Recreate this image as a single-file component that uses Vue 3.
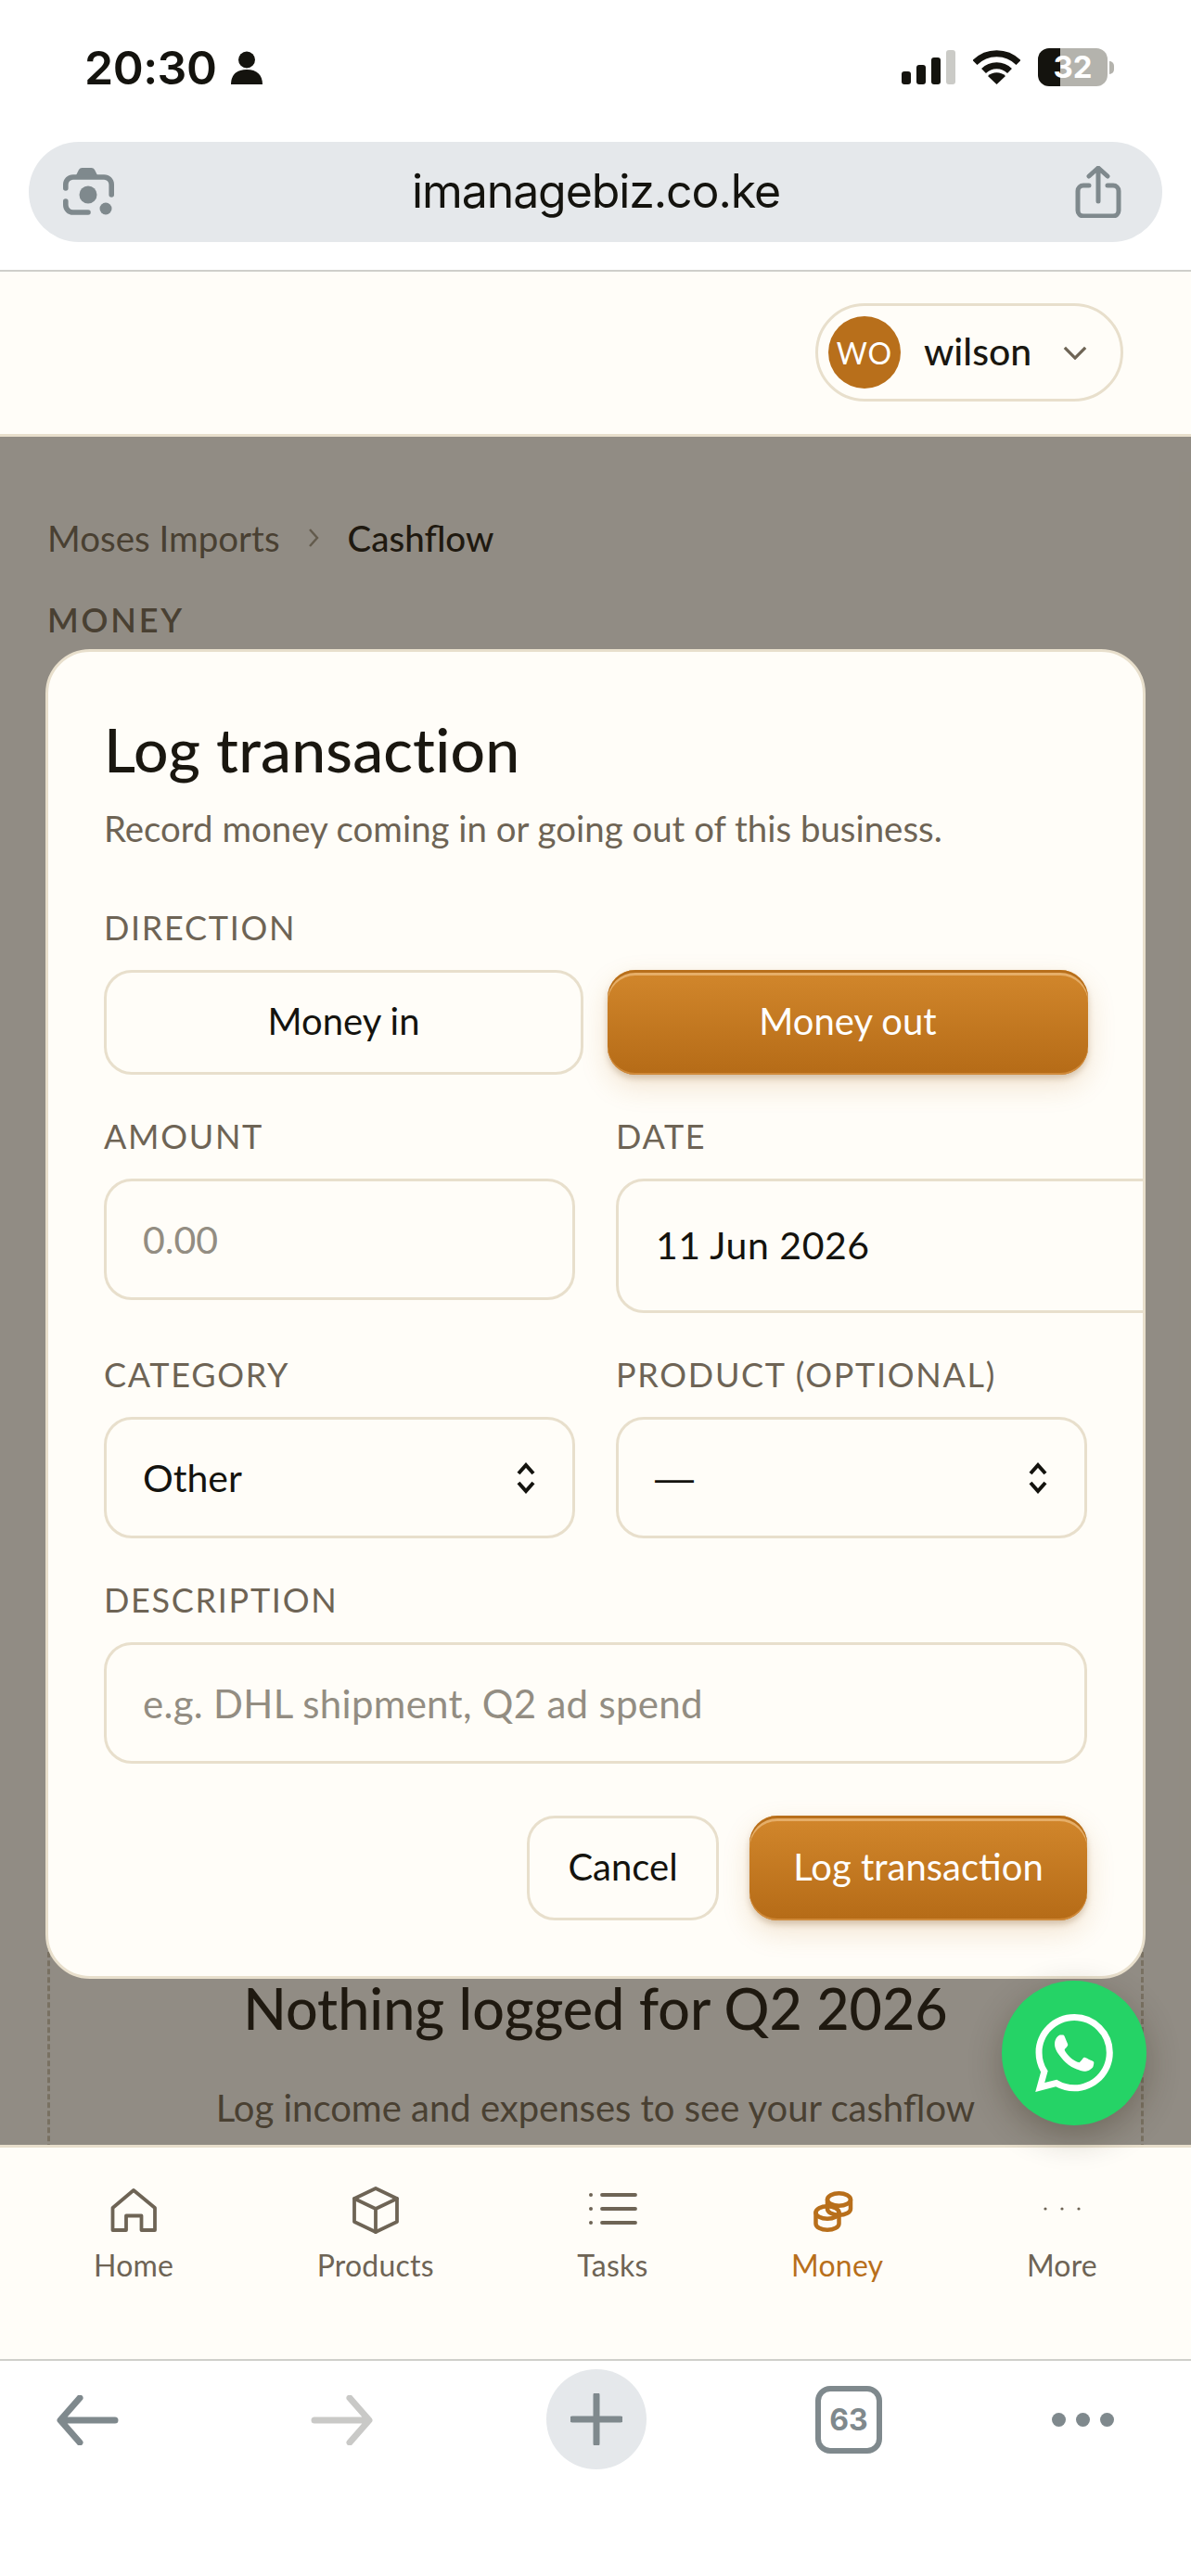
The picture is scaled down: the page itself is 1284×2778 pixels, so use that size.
<script setup>
const tabs = [
    { key: 'home', label: 'Home' },
    { key: 'products', label: 'Products' },
    { key: 'tasks', label: 'Tasks' },
    { key: 'money', label: 'Money', active: true },
    { key: 'more', label: 'More' }
]
</script>

<template>
    <div class="phone">
        <header class="status">
            <div class="status-left">
                <span class="time">20:30</span>
                <svg class="person" viewBox="0 0 34 36"><circle cx="17" cy="9.5" r="9" /><path d="M0 36c0-10 6-16 17-16s17 6 17 16z" /></svg>
            </div>
            <div class="status-right">
                <div class="signal"><i class="b1"></i><i class="b2"></i><i class="b3"></i><i class="b4"></i></div>
                <svg class="wifi" viewBox="0 0 51 37">
                    <path d="M2 13.5a33 33 0 0 1 47 0" />
                    <path d="M11.5 22.5a20 20 0 0 1 28 0" />
                    <path class="wifi-dot" d="M25.5 37 16 28a14 14 0 0 1 19 0z" />
                </svg>
                <div class="battery"><span>32</span></div>
                <i class="nub"></i>
            </div>
        </header>

        <div class="urlbar">
            <svg class="lens" viewBox="0 0 60 60">
                <path class="lens-top" d="M15 14l4-8a4 4 0 0 1 3.5-2h10a4 4 0 0 1 3.5 2l4 8z" />
                <path class="lens-line" d="M4.800 26v-4a8 8 0 0 1 8-8h33.400a8 8 0 0 1 8 8v11" />
                <path class="lens-line" d="M4.800 40v4a8 8 0 0 0 8 8H29" />
                <circle cx="29" cy="33" r="9.500" />
                <circle cx="48" cy="48" r="6.500" />
            </svg>
            <span class="url">imanagebiz.co.ke</span>
            <svg class="share" viewBox="0 0 50 56">
                <path d="M15 21H9a6 6 0 0 0-6 6v21a6 6 0 0 0 6 6h32a6 6 0 0 0 6-6V27a6 6 0 0 0-6-6h-6" />
                <path d="M25 38V3M15 11l10-9 10 9" />
            </svg>
        </div>

        <div class="topbar">
            <div class="user">
                <span class="avatar">WO</span>
                <span class="user-name">wilson</span>
                <svg class="caret" viewBox="0 0 28 16"><path d="M2 2l12 12L26 2" /></svg>
            </div>
        </div>

        <main class="main">
            <nav class="crumbs">
                <span>Moses Imports</span>
                <svg viewBox="0 0 12 22"><path d="M2 2l8 9-8 9" /></svg>
                <strong>Cashflow</strong>
            </nav>
            <div class="eyebrow">MONEY</div>
            <section class="empty">
                <h2>Nothing logged for Q2 2026</h2>
                <p>Log income and expenses to see your cashflow trends.</p>
            </section>

            <div class="overlay">
                <div class="modal">
                    <h1>Log transaction</h1>
                    <p class="sub">Record money coming in or going out of this business.</p>

                    <div class="label first">DIRECTION</div>
                    <div class="direction">
                        <button type="button" class="btn plain">Money in</button>
                        <button type="button" class="btn primary">Money out</button>
                    </div>

                    <div class="fields">
                        <div>
                            <div class="label">AMOUNT</div>
                            <div class="field placeholder">0.00</div>
                        </div>
                        <div>
                            <div class="label">DATE</div>
                            <div class="field date">11 Jun 2026</div>
                        </div>
                        <div>
                            <div class="label">CATEGORY</div>
                            <div class="field select">
                                <span>Other</span>
                                <svg class="updown" viewBox="0 0 24 34"><path d="M4 12l8-9 8 9M4 22l8 9 8-9" /></svg>
                            </div>
                        </div>
                        <div>
                            <div class="label">PRODUCT (OPTIONAL)</div>
                            <div class="field select">
                                <span class="none">—</span>
                                <svg class="updown" viewBox="0 0 24 34"><path d="M4 12l8-9 8 9M4 22l8 9 8-9" /></svg>
                            </div>
                        </div>
                    </div>

                    <div class="label">DESCRIPTION</div>
                    <div class="field placeholder long">e.g. DHL shipment, Q2 ad spend</div>

                    <div class="actions">
                        <button type="button" class="btn plain cancel">Cancel</button>
                        <button type="button" class="btn primary submit">Log transaction</button>
                    </div>
                </div>
            </div>
        </main>

        <nav class="tabbar">
            <div v-for="tab in tabs" :key="tab.key" class="tab" :class="{ active: tab.active }">
                <svg class="tab-icon" :class="tab.key" viewBox="0 0 54 54">
                    <path v-if="tab.key === 'home'" d="M27 5 4.5 24v24h14.5V32.5h16.5V48H50V24z" />
                    <template v-else-if="tab.key === 'products'">
                        <path d="M27 3 4 14v25l23 11 23-11V14z" />
                        <path d="M4 14l23 11 23-11M27 25v25" />
                    </template>
                    <template v-else-if="tab.key === 'tasks'">
                        <path d="M16 10h36M16 25h36M16 40h36" />
                        <circle class="dot" cx="4" cy="10" r="2" />
                        <circle class="dot" cx="4" cy="25" r="2" />
                        <circle class="dot" cx="4" cy="40" r="2" />
                    </template>
                    <template v-else-if="tab.key === 'money'">
                        <ellipse cx="31.500" cy="15" rx="12.500" ry="6.800" />
                        <path d="M19 15v10c0 3.800 5.600 6.800 12.500 6.800S44 28.800 44 25V15" />
                        <ellipse cx="19" cy="29" rx="12.500" ry="6.800" />
                        <path d="M6.500 29v12c0 3.800 5.600 6.800 12.500 6.800s12.500-3 12.500-6.800V29" />
                    </template>
                    <template v-else>
                        <circle class="dot" cx="9" cy="25" r="1.600" />
                        <circle class="dot" cx="27" cy="25" r="1.600" />
                        <circle class="dot" cx="45" cy="25" r="1.600" />
                    </template>
                </svg>
                <span>{{ tab.label }}</span>
            </div>
        </nav>

        <div class="browserbar">
            <svg class="arrow" viewBox="0 0 68 54"><path d="M64 27H6M26 3 5 27l21 24" /></svg>
            <svg class="arrow forward" viewBox="0 0 68 54"><path d="M4 27h58M42 3l21 24-21 24" /></svg>
            <div class="plus"><svg viewBox="0 0 56 56"><path d="M28 2v52M2 28h52" /></svg></div>
            <div class="tabcount">63</div>
            <div class="dots"><i></i><i></i><i></i></div>
        </div>

        <button type="button" class="fab" aria-label="WhatsApp">
            <svg viewBox="0 0 24 24"><path d="M17.472 14.382c-.297-.149-1.758-.867-2.03-.967-.273-.099-.471-.148-.67.15-.197.297-.767.966-.94 1.164-.173.199-.347.223-.644.075-.297-.15-1.255-.463-2.39-1.475-.883-.788-1.48-1.761-1.653-2.059-.173-.297-.018-.458.13-.606.134-.133.298-.347.446-.52.149-.174.198-.298.298-.497.099-.198.05-.371-.025-.52-.075-.149-.669-1.612-.916-2.207-.242-.579-.487-.5-.669-.51-.173-.008-.371-.01-.57-.01-.198 0-.52.074-.792.372-.272.297-1.04 1.016-1.04 2.479 0 1.462 1.065 2.875 1.213 3.074.149.198 2.096 3.2 5.077 4.487.709.306 1.262.489 1.694.625.712.227 1.36.195 1.871.118.571-.085 1.758-.719 2.006-1.413.248-.694.248-1.289.173-1.413-.074-.124-.272-.198-.57-.347m-5.421 7.403h-.004a9.87 9.87 0 01-5.031-1.378l-.361-.214-3.741.982.998-3.648-.235-.374a9.86 9.86 0 01-1.51-5.26c.001-5.45 4.436-9.884 9.888-9.884 2.64 0 5.122 1.03 6.988 2.898a9.825 9.825 0 012.893 6.994c-.003 5.45-4.437 9.884-9.885 9.884m8.413-18.297A11.815 11.815 0 0012.05 0C5.495 0 .16 5.335.157 11.892c0 2.096.547 4.142 1.588 5.945L.057 24l6.305-1.654a11.882 11.882 0 005.683 1.448h.005c6.554 0 11.89-5.335 11.893-11.893a11.821 11.821 0 00-3.48-8.413z" /></svg>
        </button>
    </div>
</template>

<style>
html, body { margin: 0; background: #fff; }
</style>

<style scoped>
.phone { position: relative; width: 1284px; height: 2778px; display: flex; flex-direction: column; overflow: hidden; background: #fff; color: #1a1710; font-family: Lato, "Noto Sans", sans-serif; }

.status { height: 153px; flex: none; box-sizing: border-box; padding: 46px 0 0 91px; display: flex; justify-content: space-between; align-items: flex-start; font-family: Inter, sans-serif; }
.status-left { display: flex; align-items: center; gap: 16px; height: 54px; }
.time { font-size: 50px; font-weight: 600; letter-spacing: -.5px; color: #14130e; line-height: 54px; }
.person { width: 34px; height: 36px; fill: #14130e; }
.status-right { position: relative; width: 312px; height: 60px; display: flex; }
.signal { position: absolute; left: 0; top: 8px; width: 58px; height: 37px; display: flex; align-items: flex-end; gap: 6px; }
.signal i { width: 10px; border-radius: 3px; background: #14130e; }
.signal .b1 { height: 14px; }
.signal .b2 { height: 21px; }
.signal .b3 { height: 29px; }
.signal .b4 { height: 37px; background: #cbcbc7; }
.wifi { position: absolute; left: 77px; top: 8px; width: 51px; height: 37px; }
.wifi path { fill: none; stroke: #14130e; stroke-width: 7; }
.wifi .wifi-dot { fill: #14130e; stroke: none; }
.battery { position: absolute; left: 147px; top: 6px; width: 75px; height: 41px; border-radius: 12px; overflow: hidden; background: linear-gradient(90deg, #14130e 24px, #b4b3ad 24px); display: flex; align-items: center; justify-content: center; }
.battery span { color: #fff; font-size: 33px; font-weight: 700; line-height: 41px; }
.nub { position: absolute; left: 224px; top: 20px; width: 5px; height: 14px; border-radius: 0 6px 6px 0; background: #b4b3ad; }

.urlbar { height: 108px; flex: none; margin: 0 31px; border-radius: 54px; background: #e5e8eb; display: flex; align-items: center; justify-content: space-between; padding: 0 44px 0 35px; }
.lens { width: 60px; height: 60px; }
.lens circle, .lens-top { fill: #7f898d; }
.lens-line { fill: none; stroke: #7f898d; stroke-width: 5.600; stroke-linecap: round; }
.url { font-family: Inter, sans-serif; font-size: 50px; letter-spacing: -1.100px; color: #14130e; padding-bottom: 3px; }
.share { width: 50px; height: 56px; fill: none; stroke: #7f898d; stroke-width: 5; stroke-linecap: round; stroke-linejoin: round; }

.topbar { height: 180px; flex: none; box-sizing: border-box; margin-top: 30px; border-top: 2px solid #cfcfcb; border-bottom: 3px solid #e8dfcc; background: #fffdf8; padding: 34px 73px 0 0; display: flex; justify-content: flex-end; align-items: flex-start; }
.user { width: 332px; height: 106px; box-sizing: border-box; border: 3px solid #e8dfcc; border-radius: 53px; display: flex; align-items: center; padding-left: 11px; }
.avatar { width: 78px; height: 78px; flex: none; border-radius: 50%; background: #b86f1b; color: #fff; font-size: 32px; letter-spacing: 1px; display: flex; align-items: center; justify-content: center; }
.user-name { margin-left: 25px; font-size: 41px; font-weight: 500; padding-bottom: 3px; }
.caret { width: 26px; height: 15px; margin-left: 34px; fill: none; stroke: #6e6455; stroke-width: 3.500; }

.main { position: relative; flex: none; height: 1842px; overflow: hidden; background: #fffdf8; padding: 79px 51px 0; box-sizing: border-box; }
.crumbs { height: 60px; display: flex; align-items: center; font-size: 38.500px; color: #6e6455; }
.crumbs svg { width: 12px; height: 22px; margin: 0 31px 0 30px; fill: none; stroke: #a39a8a; stroke-width: 2.500; }
.crumbs strong { color: #1a1710; font-weight: 500; }
.eyebrow { margin-top: 34px; font-size: 36px; line-height: 48px; font-weight: 600; letter-spacing: 2.800px; color: #6e6455; }
.empty { box-sizing: border-box; margin-top: 30px; height: 1700px; border: 3px dashed #cfc6b5; border-radius: 48px; text-align: center; padding: 1399px 90px 0; }
.empty h2 { margin: 0; font-size: 61px; line-height: 84px; font-weight: 500; }
.empty p { margin: 35px auto 0; max-width: 900px; font-size: 40px; line-height: 60px; color: #6e6455; }

.overlay { position: absolute; inset: 0; background: rgba(35, 28, 15, .5); display: flex; justify-content: center; align-items: flex-start; padding-top: 229px; box-sizing: border-box; }
.modal { width: 1186px; box-sizing: border-box; overflow: hidden; background: #fffdf8; border: 3px solid #e8dfcc; border-radius: 48px; padding: 60px 60px; }
.modal h1 { margin: 0; font-size: 66px; line-height: 90px; font-weight: 500; letter-spacing: .2px; }
.sub { margin: 13px 0 0; font-size: 38.400px; line-height: 54px; color: #6e6455; }
.label { margin-top: 42px; margin-bottom: 22px; font-size: 36px; line-height: 48px; letter-spacing: 1.700px; color: #6e6455; white-space: nowrap; }
.label.first { margin-top: 56px; }
.direction { display: grid; grid-template-columns: 517px 518px; gap: 26px; }
.btn { box-sizing: border-box; height: 113px; border-radius: 30px; font-family: inherit; font-size: 40px; padding: 0 0 4px; cursor: pointer; }
.btn.plain { background: #fffdf8; border: 3px solid #e8dfcc; color: #14130e; }
.btn.primary { border: 0; color: #fff; background: linear-gradient(#d2872c, #b56b17); box-shadow: inset 0 3px #b86f1b, inset 0 6px rgba(255, 225, 180, .45), inset 0 -2px #d08a3a, 0 4px 6px rgba(120, 80, 30, .25), 0 12px 30px rgba(184, 111, 27, .18); }
.fields { display: grid; grid-template-columns: 508px 508px; column-gap: 44px; }
.field { box-sizing: border-box; height: 131px; border: 3px solid #e8dfcc; border-radius: 30px; padding: 0 39px; display: flex; align-items: center; font-size: 41px; background: #fffdf8; color: #14130e; }
.field.placeholder { color: #938d82; }
.field.long { font-size: 42px; letter-spacing: .3px; }
.field.date { height: 145px; width: 640px; padding: 0 0 3px 40px; letter-spacing: .5px; }
.field.select { justify-content: space-between; padding-right: 38px; }
.none { font-family: "Liberation Sans", sans-serif; font-size: 42px; }
.updown { width: 24px; height: 34px; fill: none; stroke: #14130e; stroke-width: 4; }
.actions { margin-top: 56px; display: flex; justify-content: flex-end; gap: 33px; }
.cancel { width: 207px; }
.submit { width: 364px; }

.tabbar { height: 231px; flex: none; box-sizing: border-box; border-top: 3px solid #e8dfcc; background: #fffdf8; padding: 41px 101px 0; display: flex; justify-content: space-between; align-items: flex-start; }
.tab { display: flex; flex-direction: column; align-items: center; color: #6e6455; font-size: 32px; letter-spacing: .2px; line-height: 44px; }
.tab-icon { width: 54px; height: 54px; margin-bottom: 10px; fill: none; stroke: currentColor; stroke-width: 3.800; stroke-linejoin: round; stroke-linecap: round; }
.tab-icon .dot { fill: currentColor; stroke: none; }
.tab.active { color: #b86f1b; }
.tab-icon.money { stroke-width: 4.500; position: relative; left: -3px; }

.browserbar { flex: 1; box-sizing: border-box; border-top: 2px solid #cfcfcb; padding: 9px 0 0 60px; display: flex; align-items: flex-start; }
.arrow { width: 68px; height: 54px; margin-top: 28px; fill: none; stroke: #7f898d; stroke-width: 7; stroke-linecap: round; stroke-linejoin: round; }
.arrow.forward { margin-left: 207px; stroke: #c9c9c7; }
.plus { width: 108px; height: 108px; margin-left: 186px; border-radius: 50%; background: #e5e8eb; display: flex; align-items: center; justify-content: center; }
.plus svg { width: 56px; height: 56px; fill: none; stroke: #7f898d; stroke-width: 7; stroke-linecap: round; }
.tabcount { box-sizing: border-box; margin: 18px 0 0 182px; width: 72px; height: 73px; border: 6px solid #7f898d; border-radius: 16px; color: #7f898d; font-family: Inter, sans-serif; font-size: 32px; font-weight: 700; display: flex; align-items: center; justify-content: center; }
.dots { margin: 47px 0 0 183px; display: flex; gap: 11px; }
.dots i { width: 15px; height: 15px; border-radius: 50%; background: #7f898d; }

.fab { position: absolute; left: 1080px; top: 2136px; width: 156px; height: 156px; padding: 0; border: 0; border-radius: 50%; background: #25d366; display: flex; align-items: center; justify-content: center; box-shadow: 0 12px 36px rgba(40, 30, 10, .3); }
.fab svg { width: 84px; height: 84px; fill: #fff; }
</style>
